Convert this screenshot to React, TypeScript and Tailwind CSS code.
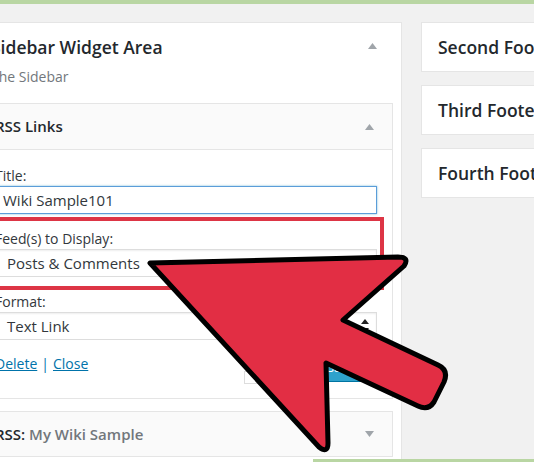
import React from "react";

const UpTri = ({ down = false }: { down?: boolean }) => (
  <svg width="9" height="6" viewBox="0 0 9 6" aria-hidden="true">
    {down ? <polygon points="0,0 9,0 4.5,6" fill="#a0a5aa" /> : <polygon points="0,6 9,6 4.5,0" fill="#a0a5aa" />}
  </svg>
);

function Field({ label, children }: { label: string; children: React.ReactNode }) {
  return (
    <div className="mb-[15px]">
      <div className="text-[14px] leading-[19px] text-[#32373c]">{label}</div>
      <div className="mt-[1px]">{children}</div>
    </div>
  );
}

function SelectBox({ value }: { value: string }) {
  return (
    <div className="h-[28px] border border-[#ddd] bg-white shadow-[inset_0_1px_2px_rgba(0,0,0,0.07)] flex items-center justify-between pl-[11px] pr-[7px] text-[15px] text-[#32373c]">
      <span>{value}</span>
      <svg width="8" height="14" viewBox="0 0 8 14" aria-hidden="true">
        <polygon points="0,5 8,5 4,0" fill="#222" />
        <polygon points="0,9 8,9 4,14" fill="#222" />
      </svg>
    </div>
  );
}

export default function App() {
  return (
    <div className="relative w-[534px] h-[462px] overflow-hidden bg-[#f1f1f1] font-['Open_Sans',sans-serif]">
      <div className="h-[4px] bg-[#b9d6a3]" />

      <div className="flex items-start gap-[19px] mt-[18px] ml-[-29px]">
        {/* Sidebar panel */}
        <div className="w-[431px] shrink-0 border border-[#e5e5e5] bg-white pb-[40px]">
          <div className="flex items-start justify-between pl-[19px] pr-[24px] pt-[12px]">
            <div>
              <div className="text-[17.5px] leading-[24px] font-semibold text-[#23282d]">Sidebar Widget Area</div>
              <div className="mt-[8px] text-[14px] leading-[20px] text-[#72777c]">The Sidebar</div>
            </div>
            <div className="mt-[8px]">
              <UpTri />
            </div>
          </div>

          <div className="mt-[16px] px-[8px] flex flex-col gap-[12px]">
            {/* RSS Links widget, open */}
            <div className="border border-[#e5e5e5]">
              <div className="h-[46px] bg-[#fafafa] border-b border-[#e5e5e5] flex items-center justify-between pl-[14px] pr-[18px]">
                <span className="text-[15px] font-semibold text-[#23282d]">RSS Links</span>
                <UpTri />
              </div>
              <div className="bg-white pl-[14px] pr-[15px] pt-[16px] pb-[14px]">
                <Field label="Title:">
                  <div className="h-[28px] border border-[#5b9dd9] shadow-[0_0_2px_rgba(30,140,190,0.6)] bg-white flex items-center pl-[7px] text-[15px] text-[#32373c]">
                    Wiki Sample101
                  </div>
                </Field>
                <Field label="Feed(s) to Display:">
                  <SelectBox value="Posts & Comments" />
                </Field>
                <div>
                  <div className="text-[14px] leading-[19px] text-[#32373c]">Format:</div>
                  <div className="mt-[1px]">
                    <SelectBox value="Text Link" />
                  </div>
                </div>
                <div className="mt-[14px] flex items-start justify-between">
                  <div className="text-[14px] leading-[19px] text-[#0073aa]">
                    <span className="underline">Delete</span>
                    <span className="mx-[4px]">|</span>
                    <span className="underline">Close</span>
                  </div>
                  <div className="flex items-start gap-[11px]">
                    <div className="mt-[17px] w-[50px] h-[13px] border border-[#ddd] bg-white" />
                    <div className="w-[72px] h-[28px] rounded-[3px] bg-[#2ea2cc] border border-[#0074a2] flex items-center justify-center text-[13px] text-white">
                      Save
                    </div>
                  </div>
                </div>
              </div>
            </div>

            {/* RSS: My Wiki Sample widget, closed */}
            <div className="h-[46px] border border-[#e5e5e5] bg-[#fafafa] flex items-center justify-between pl-[14px] pr-[18px]">
              <span className="text-[15px] font-semibold text-[#23282d]">
                RSS: <span className="text-[#72777c]">My Wiki Sample</span>
              </span>
              <UpTri down />
            </div>
          </div>
        </div>

        {/* Footer widget areas */}
        <div className="w-[260px] shrink-0 flex flex-col gap-[13px]">
          {["Second Footer Widget Area", "Third Footer Widget Area", "Fourth Footer Widget Area"].map((t) => (
            <div key={t} className="h-[50px] border border-[#e5e5e5] bg-white flex items-center pl-[16px] whitespace-nowrap text-[17.5px] font-semibold text-[#23282d]">
              {t}
            </div>
          ))}
        </div>
      </div>

      <div className="absolute left-[313px] right-0 bottom-0 h-[3px] bg-[#b9d6a3]" />

      {/* annotation: highlight box */}
      <div className="absolute left-[-20px] top-[217px] w-[404px] h-[73px] border-[4px] border-[#dd3545]" />

      {/* annotation: arrow */}
      <svg className="absolute left-0 top-0" width="534" height="462" viewBox="0 0 534 462" aria-hidden="true">
        <path
          d="M150 263 L398 257 Q410 257 404 266 L343 320 L438 365 Q449 370 444 382 L434 402 Q428 411 418 406 L326 363 L328 443 Q328 454 319 447 Z"
          fill="#e22e44"
          stroke="#000"
          strokeWidth="5"
          strokeLinejoin="round"
        />
      </svg>
    </div>
  );
}
